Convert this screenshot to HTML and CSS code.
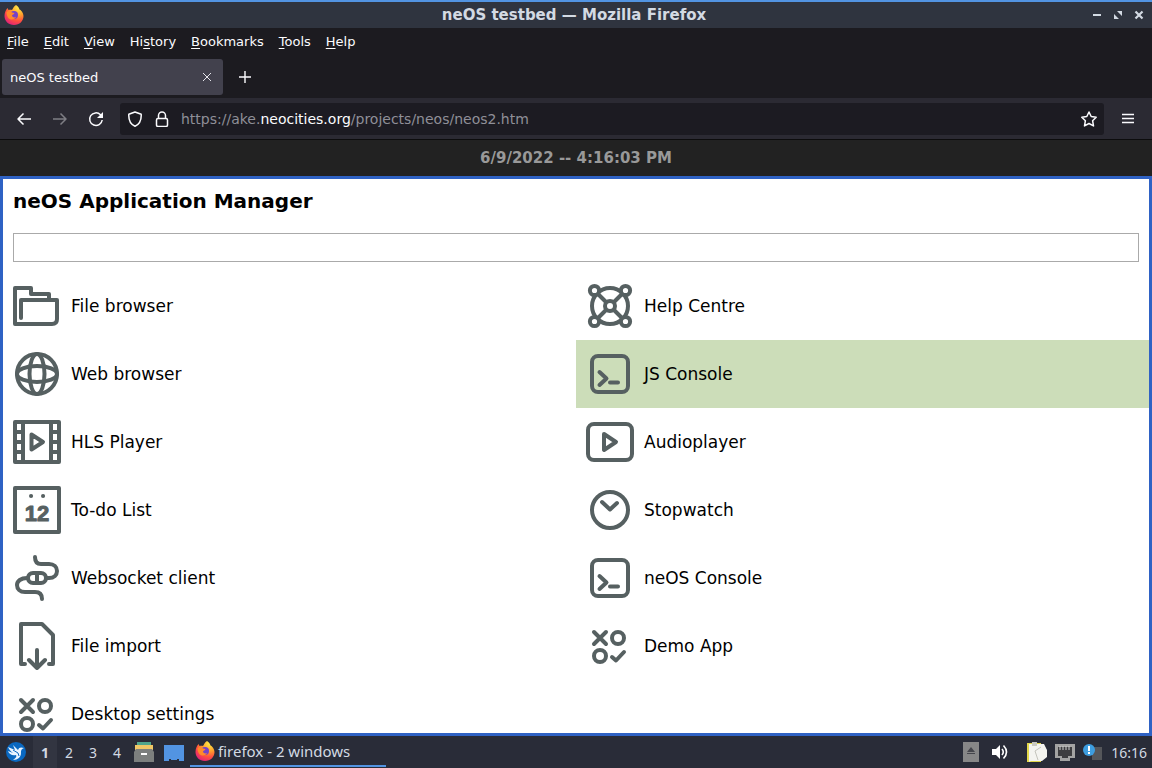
FILE: index.html
```html
<!DOCTYPE html>
<html lang="en">
<head>
  <meta charset="UTF-8">
  <meta name="viewport" content="width=device-width, initial-scale=1.0">
  <title>neOS testbed</title>
  <link rel="stylesheet" href="styles.css">
</head>
<body>
  <!-- Shared icons -->
  <svg class="defs" width="0" height="0" aria-hidden="true">
    <defs>
      <radialGradient id="flame" cx="0.75" cy="0.1" r="1">
        <stop offset="0" stop-color="#fff04a"/>
        <stop offset="0.4" stop-color="#ffa22c"/>
        <stop offset="0.7" stop-color="#ff4f3e"/>
        <stop offset="1" stop-color="#e0207c"/>
      </radialGradient>
    </defs>
    <symbol id="firefox" viewBox="0 0 20 20">
      <path fill="url(#flame)" d="M12 0C14 1 15 3 15.500 4.500C17 5 19.500 8 19.500 11C19.500 16 15.500 20 10 20C4.500 20 .5 16 .5 11C.5 8 1.500 5 3.500 3L4.500 5C6 4.500 7 4.500 8 5C9 3.500 10 1 12 0Z"/>
      <circle cx="10" cy="10" r="4" fill="#7542c8"/>
      <path fill="#ff8a2a" d="M2.500 7C5 5 7 6 8 7.500L10.500 8C10 9.500 8 9.500 8 10.500C8 12 10 13 12 12C11 15 6 15.500 4 12.500C3 11 2.500 9 2.500 7Z"/>
    </symbol>
    <symbol id="console" viewBox="0 0 48 48">
      <rect x="6" y="6" width="36" height="36" rx="6"/>
      <path d="M13.500 22L20.500 28.500L13.500 35M24 32.500H32"/>
    </symbol>
    <symbol id="apps" viewBox="0 0 48 48">
      <path d="M8 10L20 22M20 10L8 22M26 35L30 38.500L38 30"/>
      <circle cx="32" cy="16" r="6"/>
      <circle cx="14" cy="34" r="6"/>
    </symbol>
  </svg>

  <!-- Window title bar -->
  <header class="titlebar">
    <svg class="titlebar-logo" width="20" height="20"><use href="#firefox"/></svg>
    <span class="titlebar-text">neOS testbed — Mozilla Firefox</span>
    <div class="window-buttons">
      <button aria-label="Minimize"><svg width="10" height="10"><path d="M1 5H9" stroke="#d3dae3" stroke-width="2"/></svg></button>
      <button aria-label="Restore"><svg width="10" height="10"><path d="M4 1H9V6ZM1 4V9H6Z" fill="#d3dae3"/></svg></button>
      <button aria-label="Close"><svg width="10" height="10"><path d="M1.500 1.500L8.500 8.500M8.500 1.500L1.500 8.500" stroke="#d3dae3" stroke-width="2.200"/></svg></button>
    </div>
  </header>

  <nav class="menubar">
    <button><u>F</u>ile</button>
    <button><u>E</u>dit</button>
    <button><u>V</u>iew</button>
    <button>Hi<u>s</u>tory</button>
    <button><u>B</u>ookmarks</button>
    <button><u>T</u>ools</button>
    <button><u>H</u>elp</button>
  </nav>

  <div class="tabs">
    <div class="tab">
      <span>neOS testbed</span>
      <button aria-label="Close tab"><svg width="10" height="10"><path d="M1 1L9 9M9 1L1 9" stroke="#e4e4ea"/></svg></button>
    </div>
    <button class="new-tab" aria-label="New tab"><svg width="12" height="12"><path d="M6 0V12M0 6H12" stroke="#fbfbfe" stroke-width="1.400"/></svg></button>
  </div>

  <div class="toolbar">
    <button aria-label="Back"><svg width="16" height="16"><path d="M15 8H2M7.500 2.500L2 8L7.500 13.500"/></svg></button>
    <button aria-label="Forward" disabled><svg width="16" height="16"><path d="M1 8H14M8.500 2.500L14 8L8.500 13.500"/></svg></button>
    <button aria-label="Reload"><svg width="16" height="16"><path d="M14.200 9A6.300 6.300 0 1 1 12.500 3.800L14 5.500"/><path d="M15 1V7H9Z" class="solid"/></svg></button>
    <div class="urlbar">
      <svg width="16" height="16"><path d="M8 1L14.200 3.300C14.500 9 12 13.500 8 15.200C4 13.500 1.500 9 1.800 3.300Z"/></svg>
      <svg width="16" height="16"><rect x="2.500" y="7.500" width="11" height="8" rx="1.500"/><path d="M4.500 7.500V4.500A3.500 3.500 0 0 1 11.500 4.500V7.500"/></svg>
      <a class="address" href="#">https://ake.<b>neocities.org</b>/projects/neos/neos2.htm</a>
      <button aria-label="Bookmark this page"><svg width="16" height="16"><path d="M8 1L10.200 5.500L15.200 6.200L11.600 9.700L12.500 14.900L8 12.500L3.500 14.900L4.400 9.700L.8 6.200L5.800 5.500Z"/></svg></button>
    </div>
    <button class="menu" aria-label="Open application menu"><svg width="12" height="12"><path d="M0 1.500H12M0 5.500H12M0 9.500H12"/></svg></button>
  </div>

  <!-- neOS page -->
  <div class="clock">6/9/2022 -- 4:16:03 PM</div>

  <main class="manager">
    <h1>neOS Application Manager</h1>
    <input class="search" type="text" aria-label="Search applications">
    <div class="apps">
      <button class="app">
        <svg viewBox="0 0 48 48"><path d="M8 36V18H44V37Q44 42 39 42H2V6H18V12H36V18"/></svg>
        File browser
      </button>
      <button class="app">
        <svg viewBox="0 0 48 48">
          <circle cx="24" cy="24" r="18"/>
          <path d="M9 9L39 39M39 9L9 39"/>
          <circle cx="24" cy="24" r="5" class="hole"/>
          <circle cx="8.500" cy="8.500" r="4.600" class="hole"/>
          <circle cx="39.500" cy="8.500" r="4.600" class="hole"/>
          <circle cx="8.500" cy="39.500" r="4.600" class="hole"/>
          <circle cx="39.500" cy="39.500" r="4.600" class="hole"/>
        </svg>
        Help Centre
      </button>
      <button class="app">
        <svg viewBox="0 0 48 48"><circle cx="24" cy="24" r="20"/><ellipse cx="24" cy="24" rx="7.500" ry="20"/><ellipse cx="24" cy="24" rx="20" ry="8"/></svg>
        Web browser
      </button>
      <button class="app selected">
        <svg><use href="#console"/></svg>
        JS Console
      </button>
      <button class="app">
        <svg viewBox="0 0 48 48"><path d="M2 4H46V44H2ZM10 4V44M38 4V44M2 14H10M2 24H10M2 34H10M38 14H46M38 24H46M38 34H46M18.500 16.500L30 24L18.500 31.500Z"/></svg>
        HLS Player
      </button>
      <button class="app">
        <svg viewBox="0 0 48 48"><rect x="2" y="6" width="44" height="36" rx="6"/><path d="M18 16L30 24L18 32Z"/></svg>
        Audioplayer
      </button>
      <button class="app">
        <svg viewBox="0 0 48 48"><path d="M2 2H46V46H2ZM18 10H18.100M30 10H30.100"/><text x="24" y="35" text-anchor="middle">12</text></svg>
        To-do List
      </button>
      <button class="app">
        <svg viewBox="0 0 48 48"><circle cx="24" cy="24" r="18"/><path d="M16 16L24 23.500L31 17"/></svg>
        Stopwatch
      </button>
      <button class="app">
        <svg viewBox="0 0 48 48"><path d="M22 3C22 8 24 10 28 10H36C41 10 44 13 44 17C44 21 41 24 36 24H33M14 24C8 24 4 27 4 31C4 35 7 38 12 38H22C26 38 29 40 29 45M24 19V29"/><rect x="15" y="19" width="18" height="10" rx="5"/></svg>
        Websocket client
      </button>
      <button class="app">
        <svg><use href="#console"/></svg>
        neOS Console
      </button>
      <button class="app">
        <svg viewBox="0 0 48 48"><path d="M12 42H8V2H29L40 13V42H36M24 28V46M16 38L24 46L32 38"/></svg>
        File import
      </button>
      <button class="app">
        <svg><use href="#apps"/></svg>
        Demo App
      </button>
      <button class="app">
        <svg><use href="#apps"/></svg>
        Desktop settings
      </button>
    </div>
  </main>

  <!-- Desktop taskbar -->
  <footer class="taskbar">
    <button aria-label="Start menu"><svg width="20" height="20"><circle cx="10" cy="10" r="10" fill="#0a68c0"/><path d="M2 5L9 8L7 3L12 8C13 5 15 5 18 6C15 7 15 9 15 11C15 15 12 18 7 18C10 16 11 14 10 13C6 14 3 12 2 9L7 11C4 9 3 7 2 5Z" fill="#e9f4ff"/><path d="M7 8L12 11L13 14" fill="none" stroke="#0a68c0"/></svg></button>
    <div class="desktops">
      <button class="current">1</button>
      <button>2</button>
      <button>3</button>
      <button>4</button>
    </div>
    <button aria-label="File manager"><svg width="20" height="20"><path d="M3 0H17V3H3Z" fill="#4fa58c"/><path d="M1 3H19V8H1Z" fill="#f0c766"/><path d="M2 7H18L20 10V20H0V10Z" fill="#7c7f7e"/><rect x="7" y="11" width="6" height="2" fill="#fff"/></svg></button>
    <button aria-label="Show desktop"><svg width="20" height="20"><path d="M0 3H20V19H15V17H13V18H7V17H5V19H0Z" fill="#5294e2"/></svg></button>
    <button class="task"><svg width="20" height="20"><use href="#firefox"/></svg>firefox - 2 windows</button>
    <div class="tray">
      <svg width="16" height="20"><path d="M0 0H16V20H0Z" fill="#878787"/><path d="M8 5L12 10H4ZM4 11H12V12H4Z" fill="#45464c"/></svg>
      <svg class="volume" width="18" height="18"><path d="M1 6H5L9 2V16L5 12H1Z" fill="#fff"/><path d="M11 6Q13.500 9 11 12M12.500 2.500Q18.500 9 12.500 15.500" fill="none" stroke="#fff" stroke-width="1.600"/></svg>
      <svg width="20" height="20"><path d="M0 1H14V20H0Z" fill="#e3d84a"/><path d="M2 2H17L20 8V15L15 19H4L2 20Z" fill="#f4f4f0"/><path d="M5 0H10V4H5Z" fill="#c9c9c0"/><path d="M14 5L8 9L11 18" fill="none" stroke="#c4c4bc"/></svg>
      <svg width="20" height="20"><path d="M0 2H20V16H15V19H5V16H0Z" fill="#a3a3a3"/><path d="M3 5H17V14H13V16H7V14H3Z" fill="#3d3d40"/><path d="M5 4V8M8 4V8M11 4V8M14 4V8" stroke="#cfcfcf"/></svg>
      <svg width="20" height="20"><path d="M9 5H19V18H9Z" fill="#55565a"/><circle cx="6" cy="8" r="6" fill="#3d9de0"/><path d="M6 4V9M6 10V12" stroke="#fff" stroke-width="2"/></svg>
      <time>16:16</time>
    </div>
  </footer>
</body>
</html>
```

FILE: styles.css
```css
* {
  box-sizing: border-box;
}

body {
  margin: 0;
  height: 100vh;
  display: flex;
  flex-direction: column;
  overflow: hidden;
  background: #1c1b20;
  color: #fbfbfe;
  font-family: "DejaVu Sans", sans-serif;
  font-size: 13px;
}

button {
  display: flex;
  align-items: center;
  justify-content: center;
  padding: 0;
  border: none;
  background: none;
  color: inherit;
  font: inherit;
}

.defs {
  position: absolute;
}

/* Title bar */
.titlebar {
  flex: none;
  display: grid;
  grid-template-columns: 1fr auto 1fr;
  align-items: center;
  height: 28px;
  padding: 0 8px 0 4px;
  border-top: 2px solid #5294e2;
  background: #2f343f;
  color: #d3dae3;
}

.titlebar-text {
  font-size: 15px;
  font-weight: bold;
}

.window-buttons {
  display: flex;
  justify-content: flex-end;
  gap: 11px;
}

/* Menu bar */
.menubar {
  flex: none;
  display: flex;
  gap: 15px;
  height: 28px;
  padding: 0 7px 2px;
}

.menubar button {
  display: block;
}

.menubar u {
  text-underline-offset: 2px;
}

/* Tabs */
.tabs {
  flex: none;
  display: flex;
  align-items: center;
  gap: 14px;
  height: 42px;
  padding: 0 2px;
}

.tab {
  display: flex;
  align-items: center;
  justify-content: space-between;
  width: 221px;
  height: 36px;
  padding: 0 11px 0 8px;
  border-radius: 3px;
  background: #42414d;
}

.new-tab {
  width: 16px;
  height: 36px;
}

/* Navigation toolbar */
.toolbar {
  flex: none;
  display: flex;
  align-items: center;
  gap: 20px;
  height: 42px;
  padding: 0 18px 0 16px;
  border-bottom: 1px solid #0c0c0d;
  background: #2b2a33;
}

.toolbar svg {
  fill: none;
  stroke: #fbfbfe;
  stroke-width: 1.5;
  stroke-linejoin: round;
}

.toolbar .solid {
  fill: #fbfbfe;
  stroke: none;
}

.toolbar button:disabled {
  opacity: 0.4;
}

.urlbar {
  flex: 1;
  display: flex;
  align-items: center;
  gap: 11px;
  height: 32px;
  margin-left: -4px;
  padding: 0 7px;
  border-radius: 3px;
  background: #1c1b22;
}

.address {
  flex: 1;
  color: #8f8f98;
  font-size: 14px;
  text-decoration: none;
}

.address b {
  color: #fbfbfe;
  font-weight: normal;
}

.menu {
  margin-left: -2px;
}

/* neOS clock */
.clock {
  flex: none;
  height: 36px;
  background: #222;
  color: #999;
  font-size: 15px;
  font-weight: bold;
  line-height: 36px;
  text-align: center;
}

/* Application manager */
.manager {
  flex: 1;
  min-height: 0;
  overflow: hidden;
  border: 3px solid #2f62c4;
  background: #fff;
  color: #000;
}

.manager h1 {
  margin: 10px 10px 20px;
  font-size: 20px;
  line-height: 24px;
}

.search {
  display: block;
  width: calc(100% - 20px);
  height: 29px;
  margin: 0 10px 10px;
  border: 1px solid #aaa;
  background: #fff;
  font: inherit;
}

.apps {
  display: grid;
  grid-template-columns: 1fr 1fr;
}

.app {
  justify-content: flex-start;
  gap: 10px;
  height: 68px;
  padding: 10px;
  font-size: 17px;
}

.app.selected {
  background: #ccddb9;
}

.app svg {
  width: 48px;
  height: 48px;
  fill: none;
  stroke: #566061;
  stroke-width: 4;
  stroke-linecap: round;
  stroke-linejoin: round;
}

.app .hole {
  fill: #fff;
}

.app text {
  fill: #566061;
  stroke-width: 1;
  font-family: "Liberation Sans", sans-serif;
  font-size: 22px;
  font-weight: bold;
}

/* Taskbar */
.taskbar {
  flex: none;
  display: flex;
  align-items: center;
  gap: 10px;
  height: 32px;
  padding: 0 5px 0 6px;
  background: #292c38;
  color: #d3dae3;
  font-family: "Noto Sans", sans-serif;
  font-size: 14px;
}

.desktops {
  display: flex;
  margin: 0 -5px 0 -3px;
}

.desktops button {
  width: 24px;
  height: 32px;
}

.desktops .current {
  background: #323541;
  font-weight: bold;
}

.task {
  justify-content: flex-start;
  gap: 3px;
  width: 196px;
  height: 30px;
  margin-left: -4px;
  padding-left: 5px;
  border-bottom: 2px solid #5294e2;
  font-size: 15px;
}

.tray {
  display: flex;
  align-items: center;
  gap: 8px;
  margin-left: auto;
}

.volume {
  margin: 0 10px 0 4px;
}
```
